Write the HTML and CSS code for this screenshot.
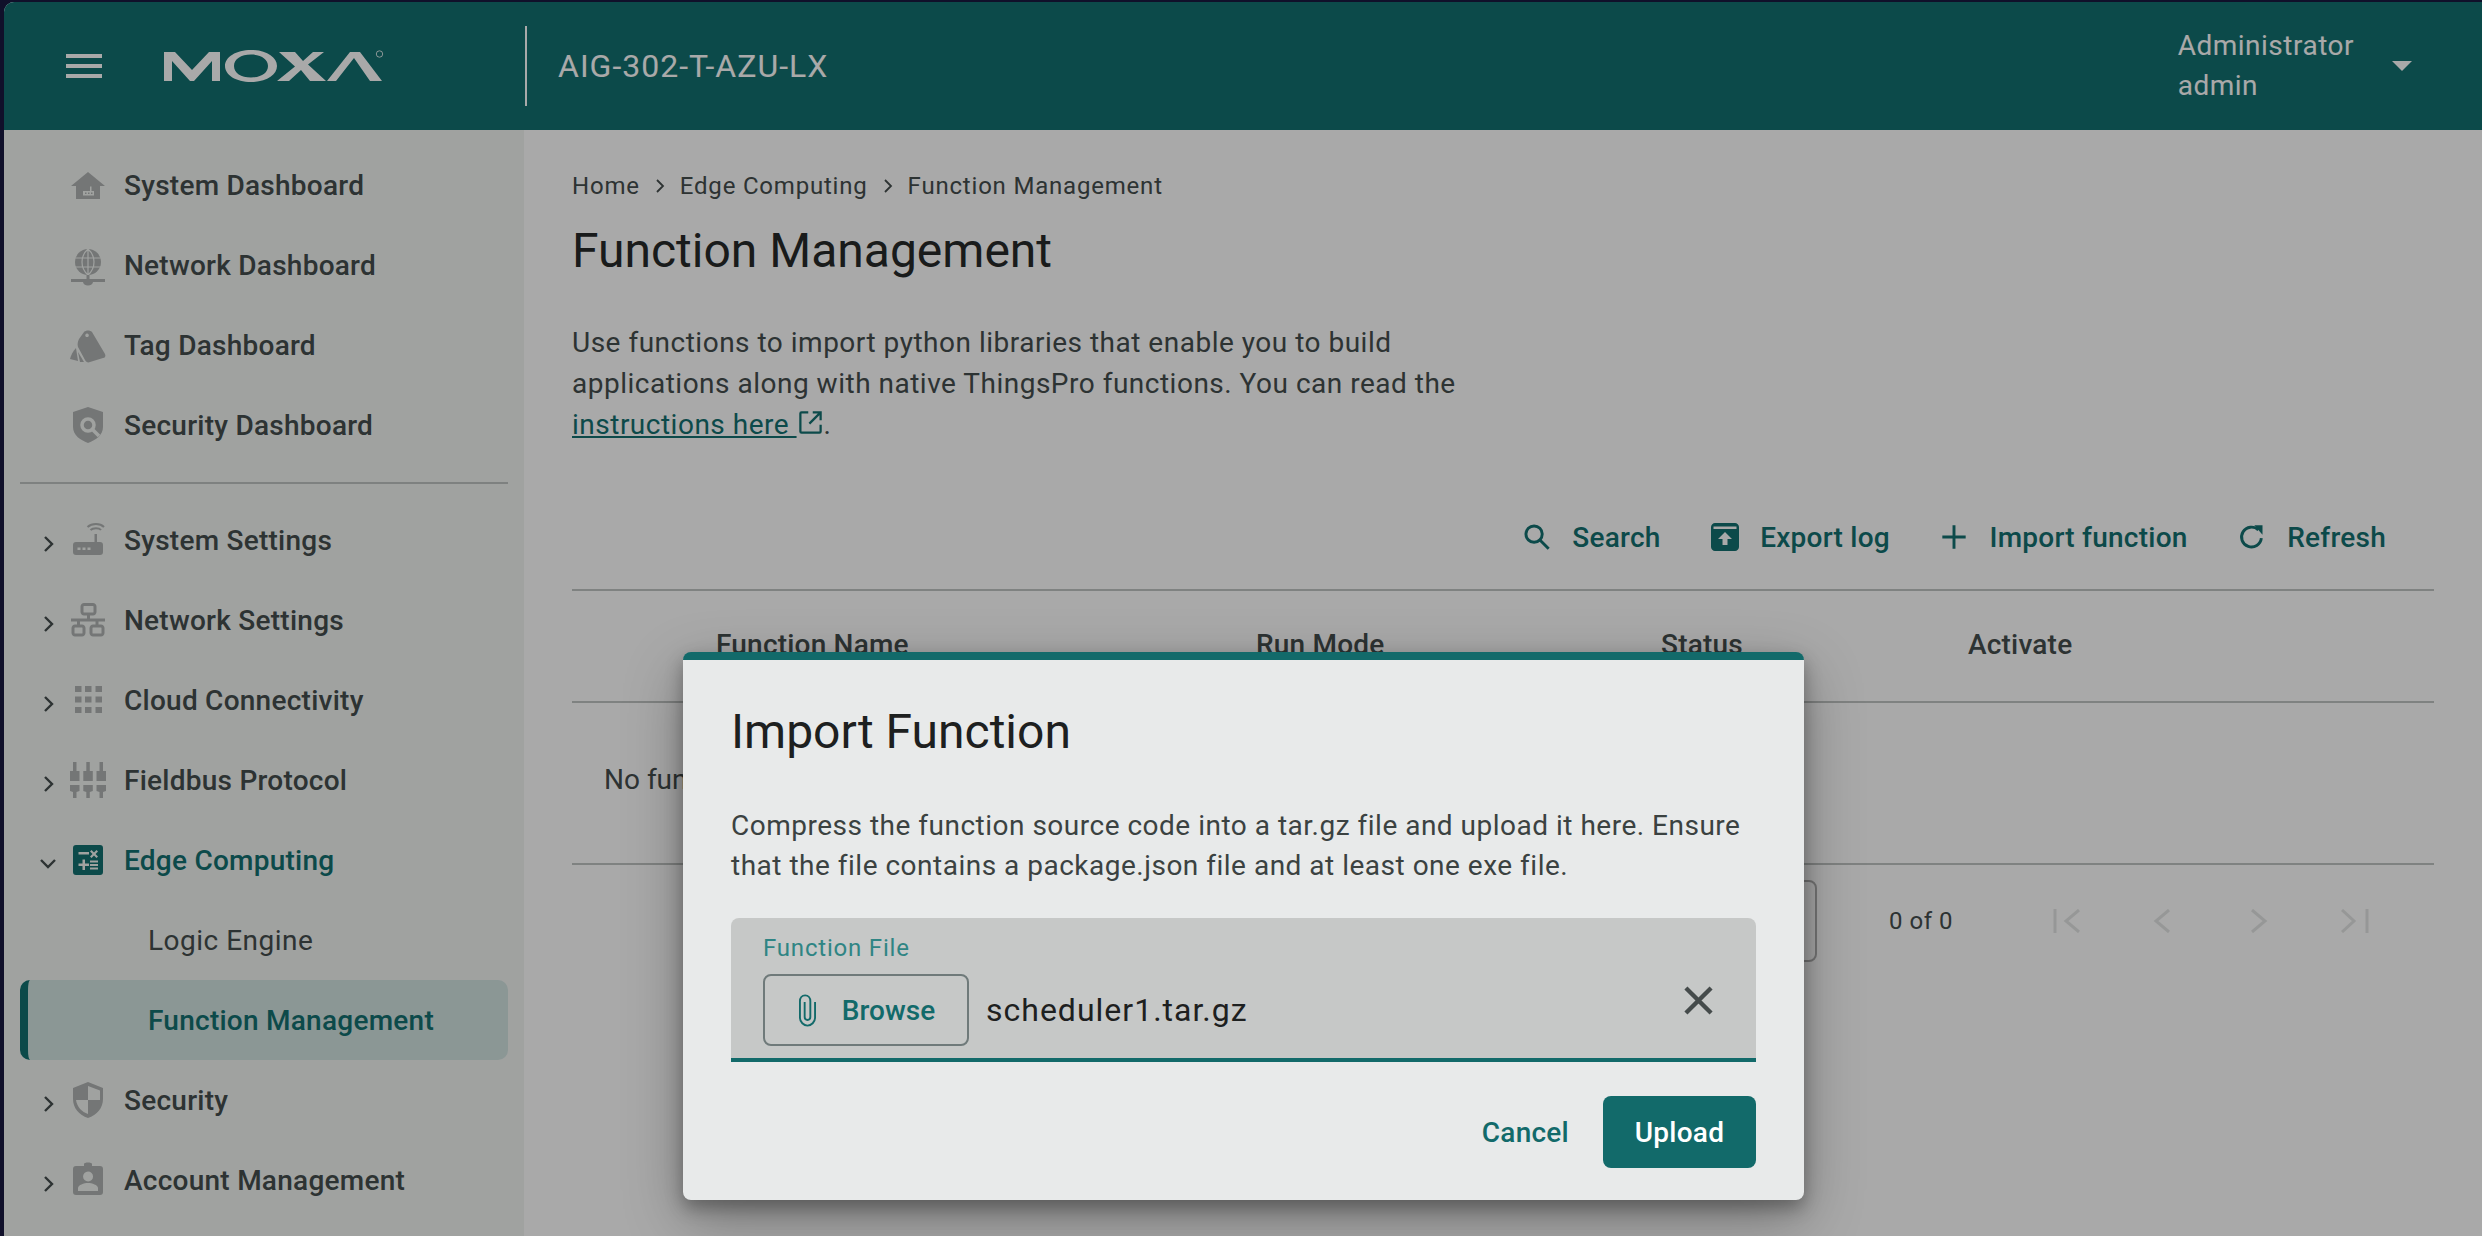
FILE: index.html
```html
<!DOCTYPE html>
<html lang="en">
<head>
    <meta charset="UTF-8">
    <meta name="viewport" content="width=device-width, initial-scale=1.0">
    <title>Function Management</title>
    <link rel="stylesheet" href="styles.css">
</head>
<body>
    <div class="frame">
        <div class="app">
            <header class="topbar">
                <button class="menu-btn" aria-label="Menu"><span></span><span></span><span></span></button>
                <svg class="logo" viewBox="0 0 220 34" role="img" aria-label="MOXA">
                    <path d="M0 32V3H11L28 21 45 3H56V32H48V12L30 32H26L8 12V32Z"/>
                    <path fill-rule="evenodd" d="M87 1C102 1 113 8 113 17S102 33 87 33 61 26 61 17 72 1 87 1ZM87 5.500C77 5.500 70 10 70 17S77 28.500 87 28.500 104 24 104 17 97 5.500 87 5.500Z"/>
                    <path d="M115 3H131L139 12 149 3H160L144 15.500 162 32H146L137 21 125 32H113L131 17.500Z"/>
                    <path d="M163 32 186 3H196L218 32H206L190 9 172 32Z"/>
                    <circle cx="215.500" cy="5" r="3.200" fill="none" stroke-width=".8" stroke="#f2f2f2"/>
                </svg>
                <div class="product">AIG-302-T-AZU-LX</div>
                <div class="user">
                    <div class="user-text">Administrator<br>admin</div>
                    <span class="caret"></span>
                </div>
            </header>
            <div class="body-row">
                <nav class="sidebar">
                    <a class="nav-item">
                        <span class="arrow-box"></span>
                        <svg class="nav-icon" viewBox="0 0 36 36"><path fill-rule="evenodd" d="M18 5 35 19H30V32H6V19H1ZM13 24V28.500H24V24H21.500V19.500H20V24ZM15 25.500H16.500V27H15ZM18 25.500H19.500V27H18ZM21 25.500H22.500V27H21Z"/></svg>
                        System Dashboard
                    </a>
                    <a class="nav-item">
                        <span class="arrow-box"></span>
                        <svg class="nav-icon" viewBox="0 0 36 36"><circle cx="18" cy="15" r="13"/><path class="cut" d="M5 11H31M5 20H31M18 2V28M18 2C10 9 10 21 18 28M18 2C26 9 26 21 18 28"/><path d="M16.500 28H19.500V32H35V35H23A5 3.500 0 0 1 13 35H1V32H16.500Z"/></svg>
                        Network Dashboard
                    </a>
                    <a class="nav-item">
                        <span class="arrow-box"></span>
                        <svg class="nav-icon" viewBox="0 0 36 36"><path fill-rule="evenodd" d="M14 5C16 3 20 3 22 5L35 27C36 29 35 31 33 31L20 35C18 36 16 35 15 33L8 20C7 17 8 14 9 12ZM17 6.500A1.800 1.800 0 1 0 17.100 6.500Z"/><path d="M6 21 8 34 0 32C1 28 3 24 6 21Z"/><path d="M8 25 14 35H10Z"/></svg>
                        Tag Dashboard
                    </a>
                    <a class="nav-item">
                        <span class="arrow-box"></span>
                        <svg class="nav-icon" viewBox="0 0 36 36"><path d="M18 0 33 5V20C33 28 26 33 18 36 10 33 3 28 3 20V5Z"/><circle class="cut heavy" cx="18" cy="18" r="6"/><path class="cut heavy" d="M23 23 29 29"/></svg>
                        Security Dashboard
                    </a>
                    <div class="nav-divider"></div>
                    <a class="nav-item">
                        <span class="arrow-box"><svg class="arrow" viewBox="0 0 10 16"><path d="M1 1 8 8 1 15"/></svg></span>
                        <svg class="nav-icon" viewBox="0 0 36 36"><path fill-rule="evenodd" d="M24.500 12H27V20H30C32 20 33 21 33 23V30C33 32 32 33 30 33H6C4 33 3 32 3 30V23C3 21 4 20 6 20H24.500ZM7.500 25.500V28H10.500V25.500ZM12.500 25.500V28H15.500V25.500ZM17.500 25.500V28H20.500V25.500Z"/><path class="line" d="M20.500 8C23 5.500 29 5.500 31 8M17.500 5C22 1 30 1 34 5"/></svg>
                        System Settings
                    </a>
                    <a class="nav-item">
                        <span class="arrow-box"><svg class="arrow" viewBox="0 0 10 16"><path d="M1 1 8 8 1 15"/></svg></span>
                        <svg class="nav-icon" viewBox="0 0 36 36"><path class="line thick" d="M14 2.500H23C24 2.500 25 3.500 25 4.500V10C25 11 24 12 23 12H14C13 12 12 11 12 10V4.500C12 3.500 13 2.500 14 2.500ZM18.500 12V18M1 18H35M8.500 18V24M27 18V24M5 24H12C13 24 14 25 14 26V31C14 32 13 33 12 33H5C4 33 3 32 3 31V26C3 25 4 24 5 24ZM23 24H31C32 24 33 25 33 26V31C33 32 32 33 31 33H23C22 33 21 32 21 31V26C21 25 22 24 23 24Z"/></svg>
                        Network Settings
                    </a>
                    <a class="nav-item">
                        <span class="arrow-box"><svg class="arrow" viewBox="0 0 10 16"><path d="M1 1 8 8 1 15"/></svg></span>
                        <svg class="nav-icon" viewBox="0 0 36 36"><path d="M5 4H11.500V10H5ZM15 4H21.500V10H15ZM25.500 4H32V10H25.500ZM5 14.500H11.500V20.500H5ZM15 14.500H21.500V20.500H15ZM25.500 14.500H32V20.500H25.500ZM5 25H11.500V31H5ZM15 25H21.500V31H15ZM25.500 25H32V31H25.500Z"/></svg>
                        Cloud Connectivity
                    </a>
                    <a class="nav-item">
                        <span class="arrow-box"><svg class="arrow" viewBox="0 0 10 16"><path d="M1 1 8 8 1 15"/></svg></span>
                        <svg class="nav-icon" viewBox="0 0 36 36"><path d="M3 0H6.500V9H9.500V19H0V9H3ZM16.300 0H19.800V9H22.800V19H13.300V9H16.300ZM29.500 0H33V9H36V19H26.500V9H29.500ZM0 23H9.500V29L6.500 30V36H3V30L0 29ZM13.300 23H22.800V29L19.800 30V36H16.300V30L13.300 29ZM26.500 23H36V29L33 30V36H29.500V30L26.500 29Z"/></svg>
                        Fieldbus Protocol
                    </a>
                    <a class="nav-item teal">
                        <span class="arrow-box"><svg class="arrow down" viewBox="0 0 16 10"><path d="M1 1 8 8 15 1"/></svg></span>
                        <svg class="nav-icon" viewBox="0 0 36 36"><path fill-rule="evenodd" d="M6 3H30C32 3 33 4 33 6V30C33 32 32 33 30 33H6C4 33 3 32 3 30V6C3 4 4 3 6 3ZM8.500 10V12.500H19V10ZM12.500 17.500V21.500H8.500V24H12.500V28H15V24H19V21.500H15V17.500ZM20 18.500V20.500H28V18.500ZM20 22V24H28V22ZM20 25.500V27.500H28V25.500ZM20 9.500 22.500 12 20 14.500 21.500 16 24 13.500 26.500 16 28 14.500 25.500 12 28 9.500 26.500 8 24 10.500 21.500 8Z"/></svg>
                        Edge Computing
                    </a>
                    <a class="nav-sub">Logic Engine</a>
                    <a class="nav-sub active">Function Management</a>
                    <a class="nav-item">
                        <span class="arrow-box"><svg class="arrow" viewBox="0 0 10 16"><path d="M1 1 8 8 1 15"/></svg></span>
                        <svg class="nav-icon" viewBox="0 0 36 36"><path fill-rule="evenodd" d="M18 0 33 6V17C33 26 27 33 18 36 9 33 3 26 3 17V6ZM18 4V18H30V8.500ZM18 18H6C7 25 12 30 18 32Z"/></svg>
                        Security
                    </a>
                    <a class="nav-item">
                        <span class="arrow-box"><svg class="arrow" viewBox="0 0 10 16"><path d="M1 1 8 8 1 15"/></svg></span>
                        <svg class="nav-icon" viewBox="0 0 36 36"><path fill-rule="evenodd" d="M6 4H14V2C14 0 22 0 22 2V4H30C32 4 33 5 33 7V30C33 32 32 33 30 33H6C4 33 3 32 3 30V7C3 5 4 4 6 4ZM18 9.500A5 5 0 1 0 18.100 19.500 5 5 0 0 0 18 9.500ZM8 29H28V26C28 23 22 21 18 21S8 23 8 26Z"/></svg>
                        Account Management
                    </a>
                </nav>
                <main class="content">
                    <div class="breadcrumb">
                        <span>Home</span>
                        <svg class="crumb-sep" viewBox="0 0 10 16"><path d="M2 2 8 8 2 14"/></svg>
                        <span>Edge Computing</span>
                        <svg class="crumb-sep" viewBox="0 0 10 16"><path d="M2 2 8 8 2 14"/></svg>
                        <span>Function Management</span>
                    </div>
                    <h1 class="page-title">Function Management</h1>
                    <p class="intro">Use functions to import python libraries that enable you to build<br>applications along with native ThingsPro functions. You can read the<br><a class="link">instructions here <svg class="ext" viewBox="0 0 24 24"><path d="M10 3H4C3 3 3 4 3 4V20C3 21 4 21 4 21H20C21 21 21 20 21 20V14M14 3H21V10M21 3 11 13"/></svg></a>.</p>
                    <div class="toolbar">
                        <a class="tool">
                            <svg class="tool-icon" viewBox="0 0 24 24"><circle cx="9.500" cy="9.500" r="7"/><path d="M14.500 14.500 22 22"/></svg>
                            Search
                        </a>
                        <a class="tool">
                            <svg class="tool-icon solid" viewBox="0 0 28 28"><path fill-rule="evenodd" d="M4 0H24C26 0 28 2 28 4V24C28 26 26 28 24 28H4C2 28 0 26 0 24V4C0 2 2 0 4 0ZM2.500 3.500V6H25.500V3.500ZM14 9 7 16H11.500V22H16.500V16H21Z"/></svg>
                            Export log
                        </a>
                        <a class="tool">
                            <svg class="tool-icon" viewBox="0 0 24 24"><path d="M12 2V22M2 12H22"/></svg>
                            Import function
                        </a>
                        <a class="tool">
                            <svg class="tool-icon" viewBox="0 0 24 24"><path d="M20 13A8.500 8.500 0 1 1 17.500 6"/><path class="fillin" d="M14 2 21 2 21 10Z"/></svg>
                            Refresh
                        </a>
                    </div>
                    <div class="table-head">
                        <span class="col-name">Function Name</span>
                        <span class="col-mode">Run Mode</span>
                        <span class="col-status">Status</span>
                        <span class="col-activate">Activate</span>
                    </div>
                    <div class="table-empty">No functions found</div>
                    <div class="pager">
                        <div class="page-size"></div>
                        <span class="page-count">0 of 0</span>
                        <svg class="page-btn" viewBox="0 0 28 24"><path d="M26 1 13 12 26 23M2 0V24"/></svg>
                        <svg class="page-btn" viewBox="0 0 28 24"><path d="M20 1 7 12 20 23"/></svg>
                        <svg class="page-btn" viewBox="0 0 28 24"><path d="M7 1 20 12 7 23"/></svg>
                        <svg class="page-btn" viewBox="0 0 28 24"><path d="M1 1 13 12 1 23M26 0V24"/></svg>
                    </div>
                </main>
            </div>
            <div class="backdrop"></div>
            <div class="dialog">
                <h2 class="dialog-title">Import Function</h2>
                <p class="dialog-text">Compress the function source code into a tar.gz file and upload it here. Ensure<br>that the file contains a package.json file and at least one exe file.</p>
                <div class="file-field">
                    <div class="file-label">Function File</div>
                    <div class="file-row">
                        <button class="browse">
                            <svg class="clip" viewBox="0 0 18 34"><path d="M17 8V25C17 29 13 33 9 33S1 29 1 25V7C1 4 3 1 6.500 1S12 4 12 7V24C12 26 11 27 9 27S6 26 6 24V8"/></svg>
                            Browse
                        </button>
                        <span class="file-name">scheduler1.tar.gz</span>
                        <svg class="clear" viewBox="0 0 30 30"><path d="M2 2 28 28M28 2 2 28"/></svg>
                    </div>
                </div>
                <div class="dialog-actions">
                    <button class="btn-text">Cancel</button>
                    <button class="btn-primary">Upload</button>
                </div>
            </div>
        </div>
    </div>
</body>
</html>
```

FILE: styles.css
```css
html, body {
    margin: 0;
    padding: 0;
    height: 100%;
    overflow: hidden;
}

body {
    background-color: #fff;
    font-family: Roboto, "Liberation Sans", sans-serif;
    color: #414949;
}

.frame {
    width: 2482px;
    height: 1236px;
    box-sizing: border-box;
    border-top: 2px solid #10102a;
    border-left: 4px solid #10102a;
    background-color: #10102a;
}

.app {
    position: relative;
    height: 100%;
    overflow: hidden;
    border-top-left-radius: 10px;
    background-color: #f2f2f2;
}

.topbar {
    display: flex;
    align-items: center;
    height: 128px;
    background-color: #126a6a;
    color: #f2f2f2;
}

.menu-btn {
    display: flex;
    flex-direction: column;
    justify-content: space-between;
    width: 36px;
    height: 24px;
    margin-left: 62px;
    padding: 0;
    border: 0;
    background: none;
}

.menu-btn span {
    display: block;
    height: 4px;
    background-color: #f2f2f2;
}

.logo {
    width: 220px;
    height: 34px;
    margin-left: 62px;
    fill: #f2f2f2;
}

.product {
    display: flex;
    align-items: center;
    height: 80px;
    margin-left: 141px;
    padding-left: 31px;
    border-left: 2px solid #f2f2f2;
    font-size: 32px;
    letter-spacing: 1px;
}

.user {
    display: flex;
    align-items: center;
    margin-left: auto;
    margin-right: 70px;
}

.user-text {
    font-size: 28px;
    line-height: 40px;
    letter-spacing: 0.5px;
}

.caret {
    width: 0;
    height: 0;
    margin-left: 38px;
    border-left: 10px solid transparent;
    border-right: 10px solid transparent;
    border-top: 10px solid #f2f2f2;
}

.body-row {
    display: flex;
    height: 1106px;
}

.sidebar {
    flex: none;
    width: 520px;
    box-sizing: border-box;
    padding: 15px 16px 0;
    background-color: #e5e8e6;
}

.nav-item, .nav-sub {
    display: flex;
    align-items: center;
    height: 80px;
    font-size: 28px;
    font-weight: 500;
    letter-spacing: 0.25px;
    color: #414949;
}

.nav-item.teal {
    color: #126a6a;
}

.arrow-box {
    flex: none;
    display: flex;
    justify-content: flex-start;
    width: 50px;
    padding-top: 8px;
}

.arrow {
    width: 10px;
    height: 16px;
    margin-left: 24px;
    fill: none;
    stroke: #414949;
    stroke-width: 2.400;
}

.arrow.down {
    width: 16px;
    height: 10px;
    margin-left: 20px;
}

.nav-icon {
    flex: none;
    width: 36px;
    height: 36px;
    margin-right: 18px;
    fill: #a7aaa9;
    overflow: visible;
}

.teal .nav-icon {
    fill: #126a6a;
}

.line {
    fill: none;
    stroke: #a7aaa9;
    stroke-width: 2;
}

.line.thick {
    stroke-width: 3;
}

.cut {
    fill: none;
    stroke: #e5e8e6;
    stroke-width: 1.200;
}

.cut.heavy {
    stroke-width: 3.500;
}

.nav-divider {
    height: 2px;
    margin: 17px 0 16px;
    background-color: #b5b9b8;
}

.nav-sub {
    padding-left: 128px;
    font-weight: 400;
    letter-spacing: 0.5px;
}

.nav-sub.active {
    box-sizing: border-box;
    padding-left: 120px;
    border-left: 8px solid #126a6a;
    border-radius: 10px;
    background-color: #c7d8d6;
    color: #126a6a;
    font-weight: 500;
    letter-spacing: 0.25px;
}

.content {
    flex: 1;
    min-width: 0;
    padding: 37px 48px 0 48px;
}

.breadcrumb {
    display: flex;
    align-items: center;
    height: 38px;
    font-size: 24px;
    letter-spacing: 0.8px;
}

.crumb-sep {
    width: 10px;
    height: 16px;
    margin: 0 15px;
    fill: none;
    stroke: #414949;
    stroke-width: 1.800;
}

.page-title {
    margin: 16px 0 0;
    font-size: 48px;
    line-height: 60px;
    font-weight: 400;
    color: #252828;
}

.intro {
    margin: 41px 0 0;
    font-size: 28px;
    line-height: 41px;
    letter-spacing: 0.5px;
}

.link {
    color: #126a6a;
    text-decoration: underline;
}

.ext {
    width: 27px;
    height: 27px;
    fill: none;
    stroke: #126a6a;
    stroke-width: 2;
    vertical-align: -2px;
}

.toolbar {
    display: flex;
    justify-content: flex-end;
    align-items: center;
    gap: 50.500px;
    height: 80px;
    margin: 52px 48px 0 0;
}

.tool {
    display: flex;
    align-items: center;
    gap: 21px;
    font-size: 28px;
    font-weight: 500;
    letter-spacing: 0.25px;
    color: #126a6a;
}

.tool-icon {
    width: 28px;
    height: 28px;
    fill: none;
    stroke: #126a6a;
    stroke-width: 2.500;
}

.tool-icon.solid {
    fill: #126a6a;
    stroke: none;
}

.tool-icon .fillin {
    fill: #126a6a;
    stroke: none;
}

.table-head {
    position: relative;
    height: 110px;
    border-top: 2px solid #b7bbb9;
    border-bottom: 2px solid #b7bbb9;
    margin-top: 12px;
    font-size: 28px;
    font-weight: 500;
    letter-spacing: 0.2px;
    line-height: 108px;
}

.table-head span {
    position: absolute;
    top: 0;
}

.col-name { left: 144px; }
.col-mode { left: 684px; }
.col-status { left: 1089px; }
.col-activate { left: 1396px; }

.table-empty {
    height: 160px;
    border-bottom: 2px solid #b7bbb9;
    padding-left: 32px;
    font-size: 28px;
    line-height: 154px;
}

.pager {
    display: flex;
    align-items: center;
    height: 112px;
    font-size: 24px;
}

.page-size {
    flex: none;
    width: 120px;
    height: 82px;
    margin-left: 1125px;
    box-sizing: border-box;
    border: 2px solid #aaa;
    border-radius: 8px;
}

.page-count {
    margin: 0 100px 0 72px;
    white-space: nowrap;
    letter-spacing: 0.5px;
}

.page-btn {
    flex: none;
    width: 28px;
    height: 24px;
    margin-right: 68px;
    fill: none;
    stroke: #d7d9d8;
    stroke-width: 3;
}

.page-btn:last-child {
    margin-right: 0;
}

.backdrop {
    position: absolute;
    inset: 0;
    background-color: rgba(0, 0, 0, 0.3);
}

.dialog {
    position: absolute;
    left: 679px;
    top: 650px;
    width: 1121px;
    height: 548px;
    box-sizing: border-box;
    padding: 0 48px;
    border-top: 8px solid #126a6a;
    border-radius: 8px;
    background-color: #e8eaea;
    box-shadow: 0 20px 60px rgba(0, 0, 0, 0.3), 0 8px 18px rgba(0, 0, 0, 0.3);
}

.dialog-title {
    margin: 44px 0 0;
    font-size: 48px;
    line-height: 56px;
    font-weight: 400;
    color: #1d2020;
}

.dialog-text {
    margin: 46px 0 0;
    font-size: 28px;
    line-height: 40px;
    letter-spacing: 0.5px;
    color: #3b4241;
}

.file-field {
    height: 144px;
    box-sizing: border-box;
    margin-top: 32px;
    padding: 16px 32px 0;
    border-bottom: 4px solid #126a6a;
    border-radius: 8px 8px 0 0;
    background-color: #c6c8c7;
}

.file-label {
    font-size: 24px;
    line-height: 28px;
    letter-spacing: 0.8px;
    color: #2f8584;
}

.file-row {
    display: flex;
    align-items: center;
    margin-top: 12px;
}

.browse {
    display: flex;
    align-items: center;
    justify-content: center;
    gap: 26px;
    width: 206px;
    height: 72px;
    padding: 0 0 0 2px;
    border: 2px solid #6f7a7a;
    border-radius: 8px;
    background: none;
    font-family: inherit;
    font-size: 28px;
    font-weight: 500;
    color: #126a6a;
}

.clip {
    width: 17px;
    height: 33px;
    fill: none;
    stroke: #126a6a;
    stroke-width: 2;
}

.file-name {
    margin-left: 17px;
    font-size: 32px;
    letter-spacing: 1px;
    color: #1d2020;
}

.clear {
    width: 29px;
    height: 29px;
    margin-left: auto;
    margin-right: 11px;
    margin-top: -20px;
    fill: none;
    stroke: #454b4b;
    stroke-width: 4.500;
}

.dialog-actions {
    display: flex;
    justify-content: flex-end;
    align-items: center;
    gap: 34px;
    margin-top: 34px;
}

.btn-text, .btn-primary {
    height: 72px;
    padding: 0;
    border: 0;
    border-radius: 8px;
    background: none;
    font-family: inherit;
    font-size: 28px;
    font-weight: 500;
    letter-spacing: 0.25px;
    color: #126a6a;
}

.btn-primary {
    width: 153px;
    background-color: #126a6a;
    color: #fff;
}
```
